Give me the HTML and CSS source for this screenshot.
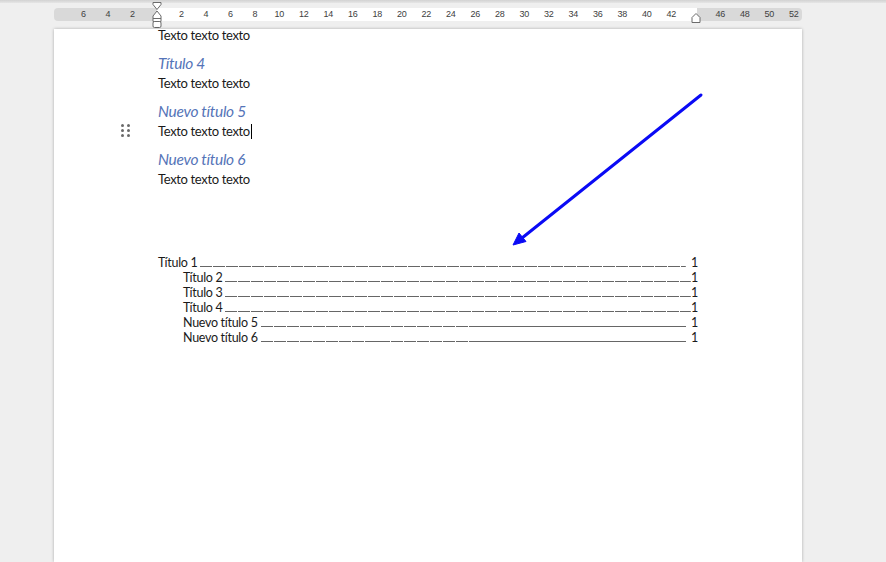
FILE: index.html
```html
<!DOCTYPE html>
<html lang="es">
<head>
    <meta charset="UTF-8">
    <title>Documento</title>
    <link rel="stylesheet" href="styles.css">
</head>
<body>
    <div class="topbar"></div>

    <div class="ruler">
        <div class="ticks">
            <span>6</span><span>4</span><span>2</span><span></span>
            <span>2</span><span>4</span><span>6</span><span>8</span><span>10</span>
            <span>12</span><span>14</span><span>16</span><span>18</span><span>20</span>
            <span>22</span><span>24</span><span>26</span><span>28</span><span>30</span>
            <span>32</span><span>34</span><span>36</span><span>38</span><span>40</span>
            <span>42</span><span></span><span>46</span><span>48</span><span>50</span><span>52</span>
        </div>
        <svg class="indent-marker" width="12" height="27" viewBox="0 0 12 27">
            <path d="M2 1.5 H10 V3.5 L6 8.5 L2 3.5 Z" fill="#fff" stroke="#6b6b6b" stroke-width="1"/>
            <path d="M6 10 L10 15 V20.5 H2 V15 Z" fill="#fff" stroke="#6b6b6b" stroke-width="1"/>
            <path d="M2 17.5 H10" stroke="#6b6b6b" stroke-width="1"/>
            <rect x="2" y="20.5" width="8" height="6" rx="1.5" fill="#fff" stroke="#6b6b6b" stroke-width="1"/>
        </svg>
        <svg class="right-marker" width="10" height="10" viewBox="0 0 10 10">
            <path d="M5 0.5 L9 4.5 V9.5 H1 V4.5 Z" fill="#fff" stroke="#6b6b6b" stroke-width="1"/>
        </svg>
    </div>

    <div class="page">
        <div class="doc">
            <p class="text first">Texto texto texto</p>

            <h4 class="heading">Título 4</h4>
            <p class="text">Texto texto texto</p>

            <h5 class="heading">Nuevo título 5</h5>
            <p class="text current">
                <span class="handle"><i></i><i></i><i></i><i></i><i></i><i></i></span>Texto texto texto<span class="caret"></span>
            </p>

            <h6 class="heading">Nuevo título 6</h6>
            <p class="text">Texto texto texto</p>

            <div class="toc">
                <div class="toc-row gap"><span class="toc-title">Título 1</span><span class="leader"></span><span class="toc-num">1</span></div>
                <div class="toc-row sub"><span class="toc-title">Título 2</span><span class="leader"></span><span class="toc-num">1</span></div>
                <div class="toc-row sub"><span class="toc-title">Título 3</span><span class="leader"></span><span class="toc-num">1</span></div>
                <div class="toc-row sub"><span class="toc-title">Título 4</span><span class="leader"></span><span class="toc-num">1</span></div>
                <div class="toc-row sub gap"><span class="toc-title">Nuevo título 5</span><span class="leader"></span><span class="toc-num">1</span></div>
                <div class="toc-row sub gap"><span class="toc-title">Nuevo título 6</span><span class="leader"></span><span class="toc-num">1</span></div>
            </div>
        </div>

        <svg class="arrow" width="748" height="260" viewBox="0 0 748 260">
            <line x1="647" y1="66" x2="468" y2="209" stroke="#0a0af5" stroke-width="3" stroke-linecap="round"/>
            <path d="M459 216 L472 212.5 L465 204 Z" fill="#0a0af5" stroke="#0a0af5" stroke-width="1" stroke-linejoin="round"/>
        </svg>
    </div>
</body>
</html>
```

FILE: styles.css
```css
body {
    margin: 0;
    height: 100vh;
    overflow: hidden;
    background: #efefef;
    font-family: Lato, "Open Sans", sans-serif;
}

.topbar {
    height: 3px;
    background: linear-gradient(#d2d2d2, #e6e6e6);
}

/* ruler */
.ruler {
    position: relative;
    width: 748px;
    height: 13px;
    margin: 5px 0 0 54px;
    border-radius: 4px;
    background: linear-gradient(to right, #d9d9d9 0, #d9d9d9 103px, #fff 103px, #fff 643px, #d9d9d9 643px);
}

.ticks {
    display: flex;
    padding-left: 17px;
    font-family: "Liberation Sans", Arial, sans-serif;
    font-size: 9px;
    line-height: 13px;
    color: #404040;
    letter-spacing: -0.3px;
}

.ticks span {
    flex: 0 0 24.5px;
    text-align: center;
}

.indent-marker {
    position: absolute;
    left: 97px;
    top: -7px;
}

.right-marker {
    position: absolute;
    left: 637px;
    top: 5px;
}

/* page */
.page {
    position: relative;
    width: 748px;
    height: calc(100vh - 29px);
    margin: 8px 0 0 54px;
    background: #fff;
    box-shadow: 0 0 3px rgba(0, 0, 0, 0.28);
}

.doc {
    padding: 1px 104px 0;
    color: #1a1a1a;
}

.text {
    margin: 2px 0 0;
    font-size: 13px;
    line-height: 16px;
    letter-spacing: -0.35px;
}

.text.first {
    margin-top: -3px;
}

.current {
    position: relative;
}

.caret {
    display: inline-block;
    width: 1px;
    height: 15px;
    margin-left: 1px;
    background: #000;
    vertical-align: -3px;
}

.handle {
    position: absolute;
    left: -37px;
    top: 1px;
    display: grid;
    grid-template-columns: 3px 3px;
    grid-auto-rows: 3px;
    column-gap: 3px;
    row-gap: 2px;
}

.handle i {
    background: #6a6a6a;
    border-radius: 50%;
}

.heading {
    margin: 10px 0 0;
    font-size: 15.5px;
    line-height: 20px;
    font-weight: 400;
    font-style: italic;
    color: #5574b8;
    letter-spacing: -0.3px;
}

/* table of contents */
.toc {
    margin-top: 68px;
    font-size: 12.5px;
    line-height: 15px;
    letter-spacing: -0.3px;
}

.toc-row {
    display: flex;
}

.toc-row.sub {
    padding-left: 25px;
}

.leader {
    flex: 1;
    margin: 0 0 2px 3px;
    border-bottom: 1px solid transparent;
    background: repeating-linear-gradient(to right, #666 0, #666 6px, transparent 6px, transparent 6.5px) bottom / 100% 1px no-repeat;
}

.toc-row.gap .toc-num {
    margin-left: 5px;
}

.arrow {
    position: absolute;
    left: 0;
    top: 0;
    pointer-events: none;
}
```
